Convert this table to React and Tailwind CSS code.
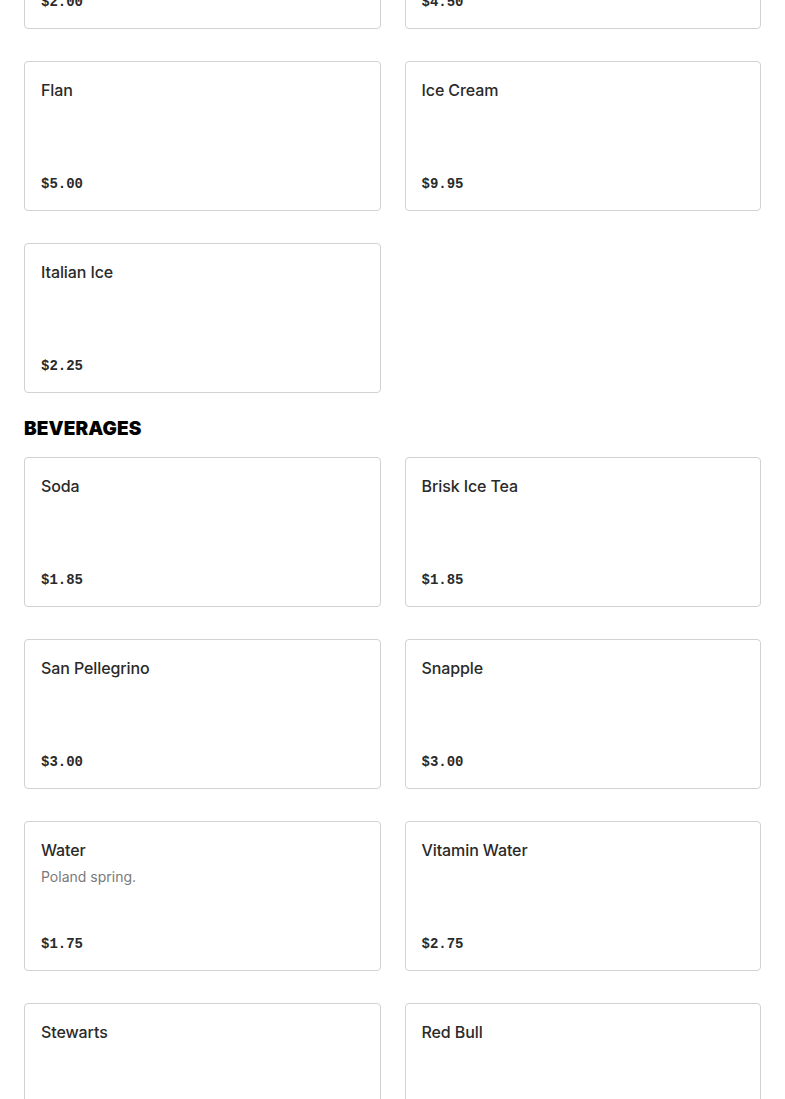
import React from 'react';

// メニューの一部（スクロール途中の表示）
const desserts = [
  { name: 'Cannoli', price: '$2.00' },
  { name: 'Tiramisu', price: '$4.50' },
  { name: 'Flan', price: '$5.00' },
  { name: 'Ice Cream', price: '$9.95' },
  { name: 'Italian Ice', price: '$2.25' },
];

const beverages = [
  { name: 'Soda', price: '$1.85' },
  { name: 'Brisk Ice Tea', price: '$1.85' },
  { name: 'San Pellegrino', price: '$3.00' },
  { name: 'Snapple', price: '$3.00' },
  { name: 'Water', desc: 'Poland spring.', price: '$1.75' },
  { name: 'Vitamin Water', price: '$2.75' },
  { name: 'Stewarts', price: '$2.50' },
  { name: 'Red Bull', price: '$3.50' },
];

function ItemCard({ item }) {
  return (
    <div className="h-[150px] flex flex-col justify-between rounded border border-[#d2d2d2] bg-white pt-4 px-4 pb-[14px]">
      <div>
        <div className="text-base leading-6 font-medium text-[#2a2a2a] font-['Inter',sans-serif] tracking-[-0.1px]">
          {item.name}
        </div>
        {item.desc && (
          <div className="mt-[5px] text-sm leading-5 text-[#7a7a7a] font-['Inter',sans-serif]">
            {item.desc}
          </div>
        )}
      </div>
      <div className="text-sm leading-6 font-bold text-[#2a2a2a] font-['Liberation_Mono',monospace]">
        {item.price}
      </div>
    </div>
  );
}

function Section({ title, items }) {
  return (
    <section>
      {title && (
        <h2 className="pt-[22px] pb-[14px] text-[19px] leading-7 font-black uppercase text-black font-['Inter',sans-serif] tracking-[0.1px]">
          {title}
        </h2>
      )}
      <div className="grid grid-cols-2 gap-x-6 gap-y-8">
        {items.map(item => (
          <ItemCard key={item.name} item={item} />
        ))}
      </div>
    </section>
  );
}

export default function App() {
  return (
    <div className="h-[1099px] overflow-hidden bg-white">
      <div className="-mt-[121px] px-6">
        <Section items={desserts} />
        <Section title="Beverages" items={beverages} />
      </div>
    </div>
  );
}
